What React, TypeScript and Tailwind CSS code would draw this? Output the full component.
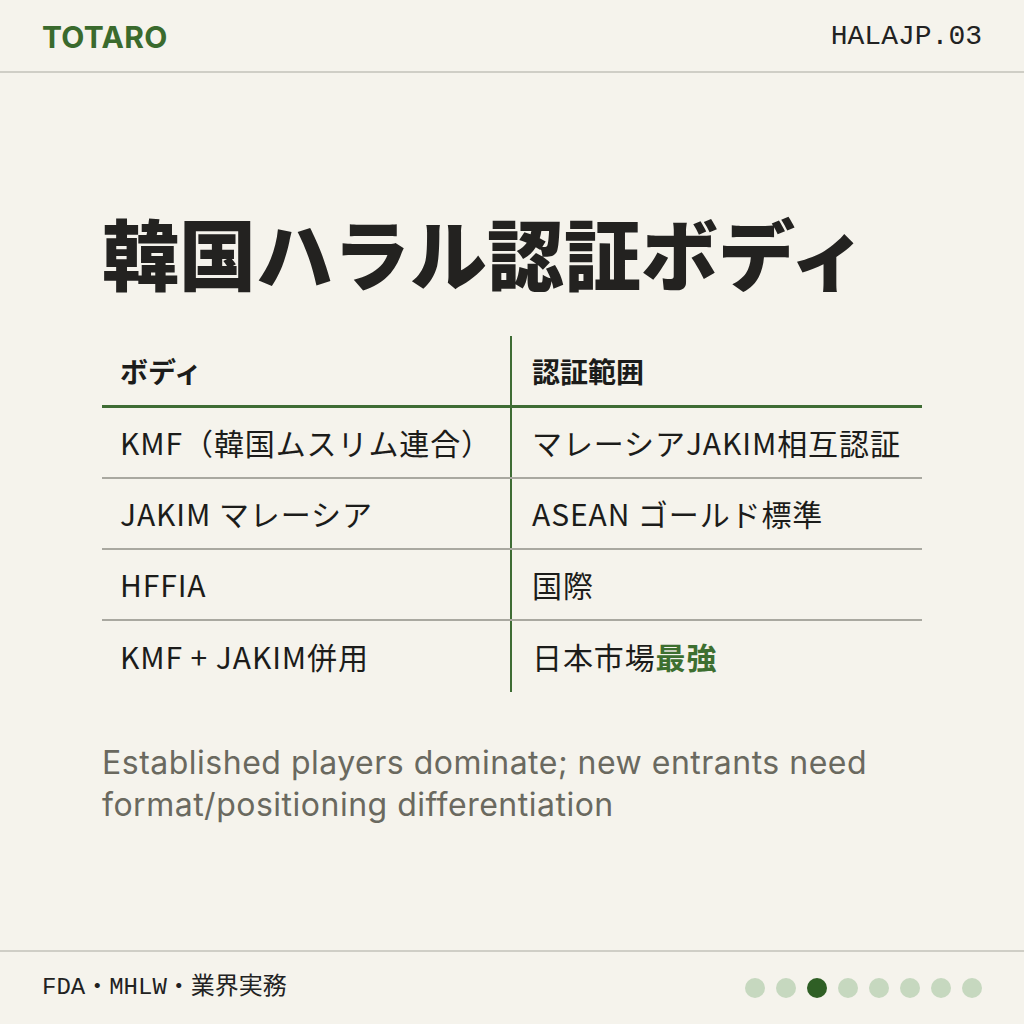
const rows: { left: string; right: React.ReactNode }[] = [
  { left: "KMF（韓国ムスリム連合）", right: "マレーシアJAKIM相互認証" },
  { left: "JAKIM マレーシア", right: "ASEAN ゴールド標準" },
  { left: "HFFIA", right: "国際" },
  {
    left: "KMF + JAKIM併用",
    right: (
      <>
        日本市場<span className="font-bold text-[#3d6f30]">最強</span>
      </>
    ),
  },
];

const jp = "font-['Noto_Sans_CJK_JP',sans-serif]";
const mono = "font-['Liberation_Mono','Noto_Sans_CJK_JP',monospace]";

export default function App() {
  return (
    <div className="w-[1024px] h-[1024px] bg-[#f5f3ec] flex flex-col text-[#1c1c1a]">
      {/* Header */}
      <header className="h-[73px] px-[42px] pt-[3px] flex items-center justify-between border-b-2 border-[#cfcec6]">
        <span className="font-['Inter',sans-serif] font-bold text-[30px] tracking-[0.01em] text-[#3a6a2d]">
          TOTARO
        </span>
        <span className={`${mono} text-[28px] text-[#222]`}>HALAJP.03</span>
      </header>

      {/* Body */}
      <main className="flex-1 px-[102px]">
        <h1
          className={`${jp} mt-[140px] font-black text-[77px] leading-none text-[#232220]`}
        >
          韓国ハラル認証ボディ
        </h1>

        <div className={`${jp} mt-[46px] w-[820px]`}>
          <div className="flex h-[72px] border-b-[3px] border-[#3e6c34]">
            <div className="w-[410px] pl-[18px] flex items-center border-r-2 border-[#3e6c34] text-[28px] font-bold">
              ボディ
            </div>
            <div className="flex-1 pl-[20px] flex items-center text-[28px] font-bold">
              認証範囲
            </div>
          </div>
          {rows.map((r, i) => (
            <div
              key={i}
              className={`flex h-[71px] ${i < rows.length - 1 ? "border-b-2 border-[#a9a8a0]" : ""}`}
            >
              <div className="w-[410px] pl-[18px] flex items-center border-r-2 border-[#3e6c34] text-[30px] tracking-[0.03em]">
                {r.left}
              </div>
              <div className="flex-1 pl-[20px] flex items-center text-[30px] tracking-[0.03em]">
                {r.right}
              </div>
            </div>
          ))}
        </div>

        <p className="mt-[50px] font-['Inter',sans-serif] text-[32px] leading-[42px] tracking-[0.5px] text-[#6a695f] w-[820px]">
          Established players dominate; new entrants need format/positioning differentiation
        </p>
      </main>

      {/* Footer */}
      <footer className="h-[74px] px-[42px] flex items-center justify-between border-t-2 border-[#cfcec6]">
        <span className={`${mono} text-[24px] text-[#222]`}>FDA・MHLW・業界実務</span>
        <div className="flex gap-[11px]">
          {Array.from({ length: 8 }).map((_, i) => (
            <span
              key={i}
              className={`w-[20px] h-[20px] rounded-full ${i === 2 ? "bg-[#2f5f25]" : "bg-[#c6d8bf]"}`}
            />
          ))}
        </div>
      </footer>
    </div>
  );
}
